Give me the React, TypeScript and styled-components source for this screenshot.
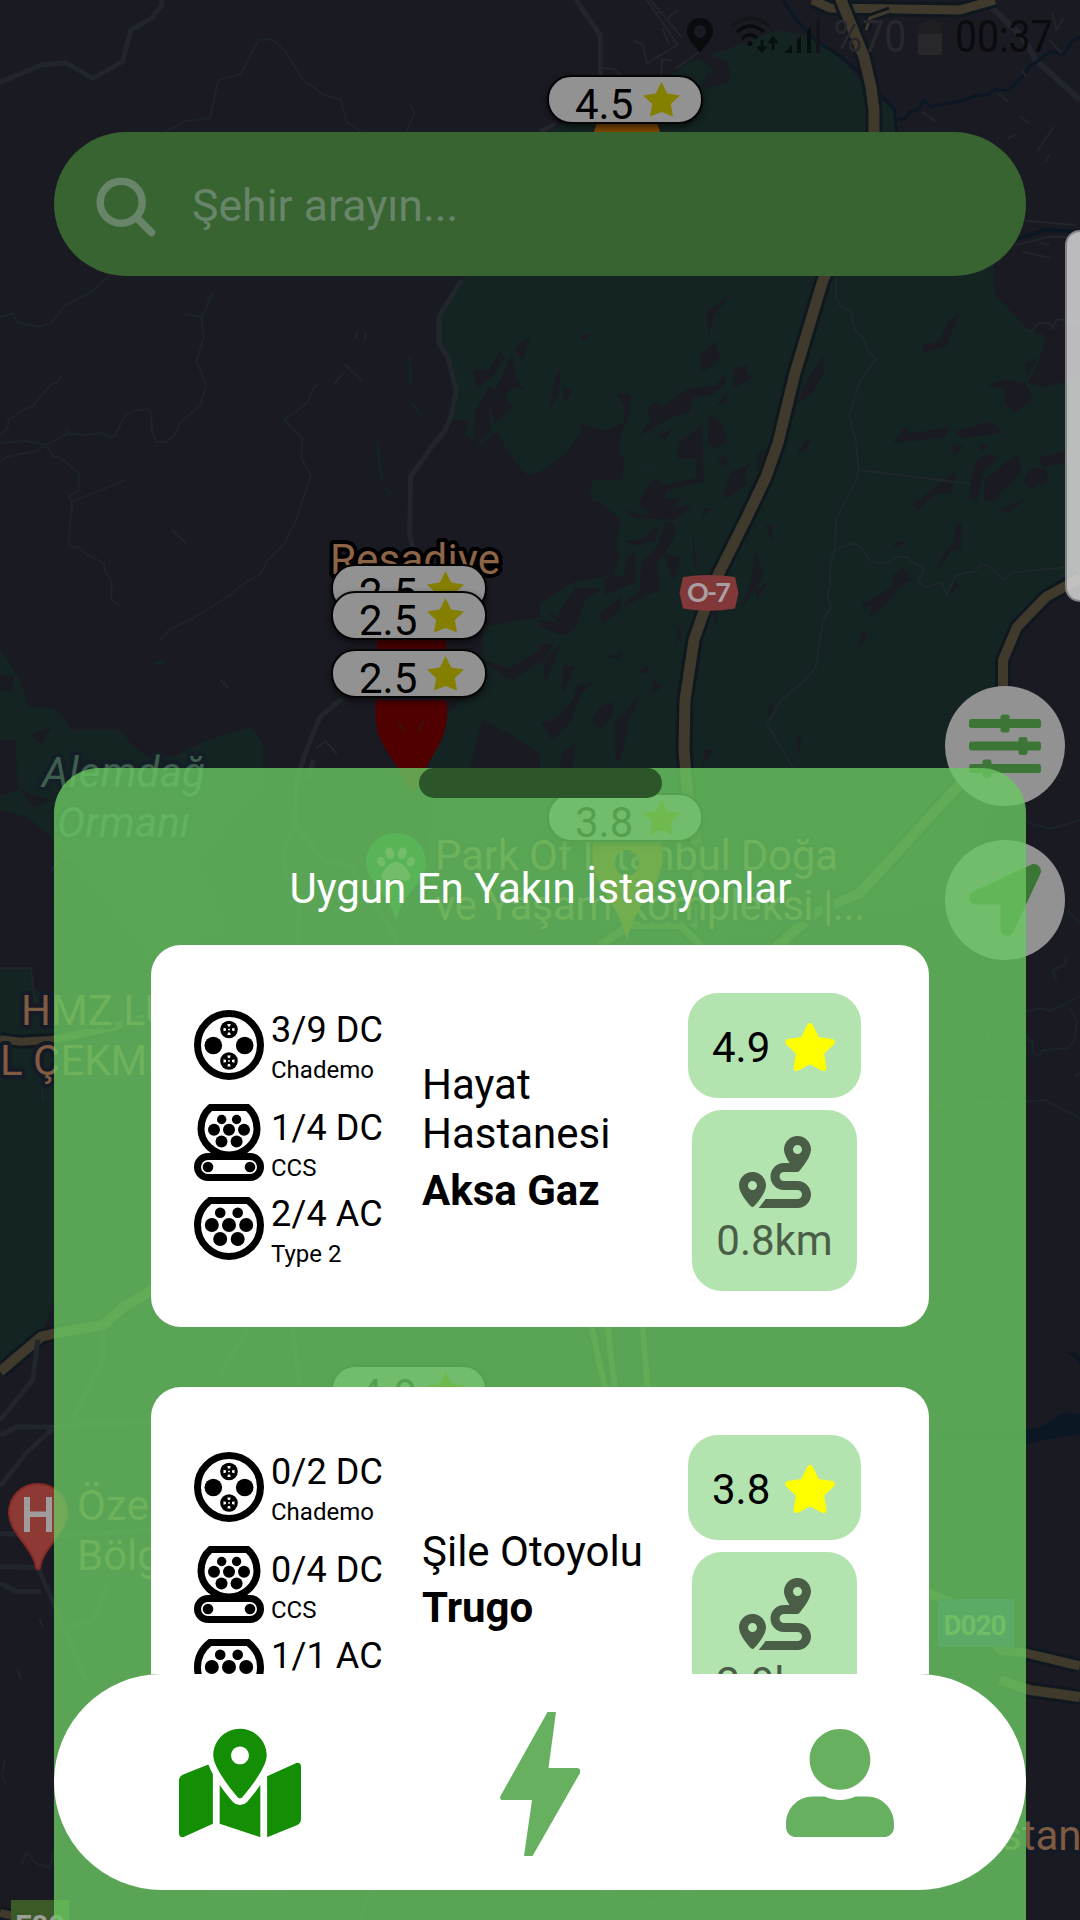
import React from "react";
import styled, { createGlobalStyle } from "styled-components";
import { FaLocationArrow, FaMapMarkedAlt, FaPaw, FaSlidersH, FaUserAlt } from "react-icons/fa";
import { FaRoute, FaStar } from "react-icons/fa6";

const GlobalStyle = createGlobalStyle`
  * { box-sizing: border-box; }
  html, body { margin: 0; padding: 0; background: #1a1a23; }
  body { font-family: Roboto, "Noto Sans", sans-serif; overflow: hidden; }
  svg { display: block; }
`;

const Screen = styled.div`
  position: relative;
  width: 1080px;
  height: 1920px;
  overflow: hidden;
  background: #1a1a23;
`;

/* ---------- map ---------- */

const MapCanvas = styled.svg`
  position: absolute;
  inset: 0;
`;

const Bubble = styled.div<{ $x: number; $y: number }>`
  position: absolute;
  left: ${(p) => p.$x}px;
  top: ${(p) => p.$y}px;
  width: 156px;
  height: 49px;
  padding: 5px 21px 0 26px;
  display: flex;
  justify-content: space-between;
  border: 2px solid #050505;
  border-radius: 24px;
  background: #929292;
  box-shadow: 0 3px 6px rgba(0, 0, 0, 0.55);
  color: #000;
  font-size: 42px;
  line-height: 45px;
`;

const BubbleStar = styled.svg`
  width: 37px;
  height: 35px;
  fill: #857f00;
`;

const BUBBLES = [
  { x: 547, y: 75, rating: "4.5" },
  { x: 331, y: 564, rating: "2.5" },
  { x: 331, y: 591, rating: "2.5" },
  { x: 331, y: 649, rating: "2.5" },
  { x: 547, y: 793, rating: "3.8" },
  { x: 331, y: 1365, rating: "4.9" },
];

const MINOR = "#20262c";
const TRAIL = "#1b2528";
const LAND = "#1a1a23";
const FOREST = "#142422";
const WATER = "#0b1824";

const Line = ({ d, c = TRAIL, w = 2 }: { d: string; c?: string; w?: number }) => (
  <path d={d} fill="none" stroke={c} strokeWidth={w} strokeLinejoin="round" vectorEffect="non-scaling-stroke" />
);

const Highway = ({ d, w = 11 }: { d: string; w?: number }) => (
  <>
    <Line d={d} c="#10181f" w={w + 6} />
    <Line d={d} c="#403a2d" w={w} />
  </>
);

const tile = (x: number, y: number) => `translate(${x} ${y}) scale(.34435 .33333)`;

function Map() {
  return (
    <MapCanvas width="1080" height="1920" viewBox="0 0 1080 1920">
      <rect width="1080" height="1920" fill={LAND} />
      {/* forests */}
      <path
        fill={FOREST}
        d="M688 63L729 48 778 30 805 35 833 50 860 80 881 100 895 110 897 200 994 263 994 293 1029 330 1050 337 1043 350 1029 383 1067 377 1080 373 1080 578 1017 630 1003 657 998 700 998 790 960 900 700 945 427 900 430 760 447 715 470 690 482 650 482 627 540 617 540 603 574 582 614 575 619 557 616 540 621 520 602 503 592 501 590 490 593 480 622 480 624 460 619 453 622 423 605 431 581 423 581 433 562 457 540 472 527 475 516 463 496 432 479 445 465 435 468 420 451 420 456 390 447 355 439 343 439 317 461 280 548 132 560 125 680 70Z"
      />
      <path
        fill={FOREST}
        d="M0 650L20 680 28 706 58 710 72 730 120 730 134 747 148 757 172 757 207 740 251 727 263 743 263 790 200 860 230 930 150 960 56 843 28 817 0 810Z M0 968L31 968 34 990 54 995 54 1300 40 1340 0 1372Z"
      />
      <path fill={LAND} d="M0 740L15 740 18 790 0 795Z M30 735L52 726 42 745Z M20 790L50 800 34 808Z M0 675L14 676 12 692 0 690Z" />
      <path fill={LAND} d="M482 720L512 735 540 755 540 768 470 768Z M700 60L704 54 726 60 731 72 728 82 708 88 702 86 708 74 716 73Z" />
      {/* clearings inside the western wood */}
      <g transform={tile(0, 280)} fill={LAND}>
        <path d="M1375 270L1420 268 1450 215 1466 235 1430 290 1385 325Z M1492 208L1538 168 1520 240Z M1487 220L1496 290 1524 330 1490 320 1465 350 1488 380 1435 430 1425 380 1440 330Z M1378 400L1420 320 1438 330 1422 390 1424 455 1400 480 1375 490Z M1470 1195L1400 1140 1480 1165 1568 1110 1568 1140 1495 1198Z" />
      </g>
      {/* clearings east of the ridge */}
      <g transform={tile(540, 280)} fill={LAND}>
        <path d="M482 97L560 38 505 105 490 165Z M118 170L165 155 122 183Z M465 225L510 183 522 240 470 277Z M565 265L600 252 598 280 622 292 562 325Z M60 260L42 300 30 385 55 340Z M70 315L92 335 68 368Z M224 340L262 342 260 400 235 460 190 455 245 430 245 380Z M310 400L330 365 355 382 430 325 505 318 540 285 540 310 510 340 440 355 438 395 375 415 285 472 325 415Z M512 375L545 335 538 370Z M345 465L390 445 362 480Z M400 490L470 435 475 605 370 630 362 655 410 655 350 720 285 675 320 605 335 595 360 615 452 595 455 535 400 535Z M490 405L525 425 543 480 510 510 488 490Z M515 545L540 522 545 560Z M555 575L612 552 590 590 605 612 540 655 530 645Z" />
        <path d="M250 690L300 705 375 680 440 678 395 718 270 715Z M470 715L475 685 498 685Z M365 725L392 730 388 775 340 850 345 930 240 980 250 960 290 935 295 850 340 800Z M245 785L300 775 345 735 335 780 285 797Z M250 840L272 815 280 905 190 945 185 895 245 885Z M358 820L410 835 388 900Z M445 750L455 880 445 840Z M100 925L180 925 130 960 100 1050 60 1065 0 1040 0 1020 50 1030 15 985 50 1010Z M170 1005L235 950 235 990 182 1032Z M0 1095L40 1090 0 1160Z M10 1150L65 1080 15 1210Z M185 1130L240 1115 235 1138Z M285 1175L310 1155 318 1182Z M330 1195L350 1220 328 1245Z M68 1155L100 1160 65 1245Z M110 1215L160 1205 95 1260Z" />
        <path d="M822 225L824 280 790 340 745 375 765 325Z M780 475L788 490 745 530 765 490Z M632 520L652 510 632 575Z M655 735L675 735 675 790Z M625 810L650 885 585 985 615 895Z M665 905L630 960 625 930Z M400 1030L410 1060 395 1100Z M940 1050L950 1072 925 1100Z M500 985L520 990 510 1035Z M936 975L1030 915 1025 885 1055 862 1078 900 1040 920 1025 950 955 1018 965 975 940 990Z M1022 810L1035 785 1065 785Z M1210 725L1225 735 1222 805 1195 812 1150 875 1170 825 1200 790Z M1205 905L1220 918 1185 945Z" />
        <path d="M1218 98L1180 200 1108 220 1112 195 1160 185 1185 125Z M1320 0L1568 0 1568 150 1420 150 1325 45Z M1470 155L1568 150 1568 290 1470 322 1415 310 1455 240Z M1300 318L1340 298 1410 310 1430 352 1380 400 1350 370 1350 330Z M1410 250L1445 235 1412 295Z M1025 490L1060 440 1075 460 1188 443 1178 472Z M1205 455L1310 425 1348 458 1225 475Z M1200 493L1230 500 1200 528Z M1275 488L1300 495 1280 517Z M1082 675L1175 600 1208 575 1195 640 1150 640 1100 688Z M1250 600L1270 540 1295 520 1328 535 1290 570 1268 668 1250 655Z M1290 600L1385 522 1398 575 1315 665 1288 660Z M1450 530L1530 515 1525 550 1460 560Z M1402 605L1425 565 1465 565 1477 600 1430 625Z M1338 685L1410 658 1355 702Z" />
      </g>
      <g transform={tile(540, 680)} fill={LAND}>
        <path d="M5 130L50 115 130 15 105 75 90 125 35 180Z M148 125L175 80 215 65 210 105 180 145Z M218 130L290 45 255 130 235 240 220 245Z M65 215L102 190 95 264 58 264Z M328 0L352 20 330 42Z M668 65L680 85 660 120Z M745 185L758 155 755 225Z M480 205L500 215 470 260Z" />
      </g>
      {/* western trails */}
      <g transform={tile(0, 280)}>
        <Line d="M0 110L38 100 50 128 115 140 150 128 190 75 265 36 305 0" />
        <Line d="M620 38L585 112 532 102M585 112L592 170 570 245 600 315 582 375 525 425 508 465 480 487 452 485 440 445 440 410 432 387 400 389 365 403 335 465 320 473 298 458 250 465 198 460 133 495 70 482 0 490M133 495L105 513 15 532 0 548M190 447L200 460" />
        <Line d="M180 287L165 308 148 313 95 378 55 395 40 412 25 415 22 445 0 465" />
        <Line d="M133 495L155 530 173 532 230 580 227 632 200 648 210 665 365 600M210 665L198 790 208 802 225 800 250 822 302 850 305 872 325 905 323 958 348 978" />
        <Line d="M930 310L910 325 890 370 825 420 878 474 875 530 902 588 860 720 823 795 778 840 755 883 705 912 665 948 560 1015 487 1053 475 1070 457 1083" />
        <Line d="M1340 0L1275 110 1275 190 1300 230 1325 330 1310 410 1290 455 1250 505 1192 590 1190 770 1205 820" c={MINOR} w={5} />
        <Line d="M500 748L542 792M640 1200L664 1223M1000 252L1052 302M998 278L968 314M1038 155L1032 175M1062 155L1060 185" c={MINOR} />
        <Line d="M1190 225L1193 315M1196 368L1222 405M1096 485L1110 610M1118 622L1138 645M447 1148L480 1148" c={FOREST} w={3} />
      </g>
      <g transform="scale(.68871 .33333)">
        <Line d="M235 0L235 15 220 55 190 90 178 185 135 235 95 188 60 195 0 247" c={MINOR} w={5} />
        <Line d="M240 396L270 362 305 355 317 240 350 222 375 120 395 118 415 155 440 240 470 285 495 300 503 365 525 396M595 315L602 340 590 396M160 826L130 880 108 900M308 878L300 900" />
      </g>
      {/* northern roads and stream */}
      <g transform={tile(540, 0)}>
        <Line d="M105 0L175 105 175 225M0 396L45 370" c={MINOR} w={5} />
        <Line d="M310 0L400 135M335 40L360 35M320 0L410 110M270 120L300 135 310 190 400 135M355 178L352 225M385 182L350 178M180 205L215 208 235 225M395 205L470 150M365 60L400 30M355 85L375 135" c={MINOR} />
        <Line d="M1310 20L1400 110 1440 180 1568 300" c={MINOR} w={6} />
        <Line d="M705 0L745 60 800 120 880 175 930 220 1030 330 1035 396M1040 358L1058 358 1075 335 1098 330 1115 300 1135 320 1235 300 1262 288 1300 285 1318 268 1360 272 1410 220 1420 200 1450 180 1482 155 1520 162 1545 125 1568 110" c={WATER} w={3} />
        <Line d="M1488 40L1500 90 1520 55M1480 120L1515 160M1400 210L1412 230M1330 280L1360 305M1110 335L1148 365M1395 350L1420 370M1358 416L1385 400M1492 380L1445 453M1480 465L1467 487M1410 662L1555 675M1450 728L1480 735M1402 755L1482 775" c={MINOR} />
        <Line d="M1390 715L1470 690 1568 695" c={WATER} w={4} />
        <Line d="M1380 735L1480 710 1568 712" c={MINOR} />
      </g>
      {/* eastern trails */}
      <g transform={tile(540, 280)}>
        <Line d="M860 0L860 60 875 82 903 95 914 150 940 175 952 213 975 238 930 300 898 405 918 490 925 570 1250 612M925 570L918 600 860 718 855 810 842 855 843 915 835 950 845 980 822 1020 800 1165 755 1215 700 1260" c="#1f272a" />
        <Line d="M850 820L870 803 908 790 935 803 955 838 975 848 1010 848 1032 832 1065 830 1080 845 1115 867 1098 905 1118 923 1155 910 1170 915 1182 945 1205 890 1232 877 1258 876 1282 852 1305 860 1348 900 1370 877 1505 865 1568 845M1410 150L1425 157 1450 128 1480 130 1490 145 1500 118 1568 125" c="#1f272a" />
        <Line d="M300 575L323 562" />
      </g>
      <g transform={tile(540, 680)}>
        <Line d="M770 0L700 60 660 135 735 264" c="#1f272a" />
        <Line d="M1411 425L1480 447 1568 420M1530 830L1523 855 1490 870 1500 905M1411 995L1455 985 1485 993 1568 948M1411 1060L1418 1080 1430 1082 1430 1115 1445 1128 1462 1110 1535 1105 1555 1075 1558 1020 1540 985M1550 1190L1568 1180M1215 980L1210 1010 1290 1045 1320 1110 1340 1110M1530 690L1568 730M1140 1275L1411 1265 1465 1260 1568 1315" />
      </g>
      {/* roads below the ridge */}
      <g transform={tile(0, 680)}>
        <Line d="M995 55L930 110 890 210 860 300 858 440 825 500 830 600M858 440L940 540 1020 560 1160 790M870 640L865 790M910 240L895 300" c={MINOR} w={5} />
        <Line d="M918 205L945 183 978 222M640 0L660 22M150 570L185 530 210 530M180 660L260 800M0 865L90 865 105 990M120 1200L125 1260" c={MINOR} />
        <Highway d="M0 1078L60 1085 150 1080 310 1045 438 1010" w={8} />
      </g>
      <g transform={tile(0, 1320)}>
        <Highway d="M0 155L120 50 160 40 300 15 360 -40 460 -100" w={10} />
        <Line d="M110 60L95 180 0 300M0 345L50 320 157 322 240 310 438 308M157 322L75 400 0 500M0 640L160 650 438 630M0 740L110 742M0 790L50 815 120 815M110 742L160 860 250 1080M300 30L300 120 210 300M720 30L640 160M850 30L870 200M160 930L270 900 310 800" c={MINOR} w={5} />
        <Line d="M115 895L125 925M52 1050L60 1075" c={MINOR} />
      </g>
      <Line d="M5 1760L2 1775 6 1785M22 1865L26 1852 35 1863 50 1868 54 1850M210 1890L280 1892 300 1908 330 1905M600 1890L640 1905 690 1895M370 1890L360 1920" />
      <Highway d="M0 1913L30 1920" w={8} />
      <Highway d="M874 132L866 190 823 280 795 373 778 443 766 477 747 517 719 573 702 617 694 640 688 680 685 700 684 750 688 800 700 860 690 940" />
      <Highway d="M812 0L830 8 960 10 995 0" w={9} />
      <Highway d="M866 30L870 18 890 11" w={3} />
      <Highway d="M839 -5L852 27 864 57 871 87 874 110 874 134" />
      <Highway d="M1080 578L1046 597 1017 627 1003 660 1003 700 960 784 860 893 815 913 775 948" w={10} />
      <Highway d="M590 1320L606 1392M607 1320L615 1392M642 1320L648 1392" w={6} />
      <Highway d="M600 945L630 925 680 925 700 945" w={8} />
      <Highway d="M920 1590L970 1610 1000 1650 1026 1653 1080 1666" w={9} />
      <Highway d="M1000 1680L1030 1690 1080 1697" w={10} />
      <path d="M920 1427L990 1432 1040 1428 1063 1413 1080 1414 1080 1434 1045 1440 1028 1444 980 1438 920 1440Z" fill={WATER} />
      <path d="M1064 1352L1076 1353 1080 1358 1080 1364 1074 1357Z" fill={WATER} />

      {/* place names */}
      <g fontFamily="Roboto, sans-serif" fontSize="42" stroke="#141a26" strokeWidth="8" paintOrder="stroke" strokeLinejoin="round">
        <g fill="#3e5e4c" fontStyle="italic" stroke="#131e26">
          <text x="42" y="787" textLength="163">Alemdağ</text>
          <text x="57" y="837" textLength="133">Ormanı</text>
        </g>
        <g fill="#7f5b42">
          <text x="21" y="1025">HMZ LUX</text>
          <text x="0" y="1075">L ÇEKMEK</text>
          <text x="435" y="870" textLength="403">Park Of İstanbul Doğa</text>
          <text x="435" y="920" textLength="430">ve Yaşam Kompleksi |...</text>
          <text x="77" y="1520">Özel</text>
          <text x="77" y="1570">Bölge</text>
          <text x="1000" y="1850">stanc</text>
        </g>
        <text x="330" y="574" textLength="170" fill="#8d6446" stroke="#000">
          Reşadiye
        </text>
      </g>
      <path d="M683 577Q709 573 735 577L738.500 593 735 608.500Q709 613 683 608.500L679.500 593Z" fill="#823738" />
      <text x="709" y="602" textAnchor="middle" fontFamily="Lato, sans-serif" fontWeight="700" fontSize="27" fill="#a99fa2" textLength="44">
        O-7
      </text>
      <rect x="938" y="1599" width="76" height="48" fill="#1e3778" />
      <text x="975" y="1635" textAnchor="middle" fontFamily="Roboto, sans-serif" fontWeight="700" fontSize="28" fill="#8a8f7a" textLength="63">
        D020
      </text>
      <rect x="11" y="1900" width="58" height="30" fill="#3b5a27" />
      <text x="40" y="1936" textAnchor="middle" fontFamily="Roboto, sans-serif" fontWeight="700" fontSize="29" fill="#9c9f98">
        E80
      </text>

      {/* station pins */}
      <path d="M377 640H446V650H377Z" fill="#4c0000" />
      <path d="M376 700Q374 716 378 733C384 752 402 768 412 797C422 768 438 752 444 733Q449 716 446 700Z" fill="#510000" />
      <path d="M398 721L404 732M424 721L418 732" stroke="#3b1114" strokeWidth="2" />
      <path d="M597 123H657L661 134H593Z" fill="#7c4600" />
      <path
        d="M594 840Q590 858 595 873C602 893 620 910 627 940C634 910 652 893 660 873Q665 858 661 840ZM627 850A12 13 0 1 1 627 876 12 13 0 1 1 627 850Z"
        fill="#8f4300"
        fillRule="evenodd"
      />
      {/* place pins */}
      <path d="M396 833C414 833 426 847 426 863C426 882 403 892 396 921C389 892 366 882 366 863C366 847 378 833 396 833Z" fill="#14642d" />
      <g transform="translate(377 845)" color="#948f8c">
        <FaPaw size={38} />
      </g>
      <path
        d="M38 1484C55 1484 67 1497 67 1513C67 1533 42 1548 40 1568Q38 1571 36 1568C34 1548 9 1533 9 1513C9 1497 21 1484 38 1484Z"
        fill="#8d3a35"
        stroke="#852a26"
        strokeWidth="2"
      />
      <path d="M24 1497H30V1511.500H46V1497H52V1532H46V1517H30V1532H24Z" fill="#a09b9c" />
    </MapCanvas>
  );
}

/* ---------- status bar ---------- */

const StatusBar = styled.div`
  position: absolute;
  top: 0;
  left: 0;
  width: 100%;
  height: 72px;
  padding-right: 25px;
  display: flex;
  justify-content: flex-end;
  align-items: center;
`;

const StatusText = styled.span<{ $color: string; $width: number }>`
  width: ${(p) => p.$width}px;
  display: flex;
  justify-content: center;
  color: ${(p) => p.$color};
  font-size: 44px;
  line-height: 52px;
  padding-top: 2px;

  span {
    display: block;
    transform: scaleX(0.89);
  }
`;

const StatusIcons = styled.svg`
  margin-right: 15px;
`;

const Battery = styled.svg`
  margin: 2px 11px 0 14px;
`;

/* ---------- search ---------- */

const SearchBar = styled.label`
  position: absolute;
  top: 132px;
  left: 54px;
  width: 972px;
  height: 144px;
  padding: 5px 42px 0;
  display: flex;
  align-items: center;
  gap: 36px;
  border-radius: 72px;
  background: #376431;
  color: #68856a;
`;

const SearchIcon = () => (
  <svg width="60" height="60" viewBox="0 0 60 60" fill="none" stroke="currentColor" strokeWidth="7.500" strokeLinecap="round">
    <circle cx="25.200" cy="25.200" r="21" />
    <path d="M41 41L55.500 55.500" />
  </svg>
);

const Placeholder = styled.span`
  font-size: 44.6px;
  line-height: 56px;
  margin-bottom: 1px;
`;

const EdgePanel = styled.div`
  position: absolute;
  top: 230px;
  left: 1065px;
  width: 30px;
  height: 372px;
  border: 2px solid rgba(120, 120, 125, 0.8);
  border-radius: 16px;
  background: rgba(228, 228, 228, 0.8);
`;

const MapActions = styled.div`
  position: absolute;
  top: 686px;
  right: 15px;
  display: flex;
  flex-direction: column;
  gap: 34px;
`;

const RoundButton = styled.button`
  width: 120px;
  height: 120px;
  padding: 0;
  display: flex;
  align-items: center;
  justify-content: center;
  border: 0;
  border-radius: 50%;
  background: #929292;
  color: #3c7636;
`;

/* ---------- bottom sheet ---------- */

const Sheet = styled.section`
  position: absolute;
  top: 768px;
  left: 54px;
  width: 972px;
  height: 1152px;
  display: flex;
  flex-direction: column;
  align-items: center;
  border-radius: 45px 45px 0 0;
  background: rgba(106, 200, 97, 0.8);
`;

const Handle = styled.div`
  width: 243px;
  height: 30px;
  flex: none;
  border-radius: 15px;
  background: #2d552a;
`;

const SheetTitle = styled.h1`
  margin: 65px 0 0;
  padding-left: 1px;
  height: 82px;
  flex: none;
  color: #fff;
  font-size: 42px;
  line-height: 52px;
  font-weight: 400;
`;

const StationList = styled.div`
  width: 778px;
  height: 729px;
  display: flex;
  flex-direction: column;
  gap: 60px;
  overflow: hidden;
`;

const Card = styled.article`
  height: 382px;
  flex: none;
  padding: 48px 68px 36px 43px;
  display: flex;
  border-radius: 30px;
  background: #fff;
  color: #000;
`;

const Plugs = styled.div`
  width: 228px;
  padding-top: 13px;
  display: flex;
  flex-direction: column;
`;

const PlugRow = styled.div<{ $gap: number }>`
  height: 80px;
  margin-bottom: ${(p) => p.$gap}px;
  display: flex;
  align-items: center;
  gap: 7px;

  svg {
    flex: none;
    margin-bottom: 3px;
  }
`;

const PlugCount = styled.div`
  font-size: 36px;
  line-height: 48px;
  letter-spacing: 0.15px;
  white-space: nowrap;
`;

const PlugName = styled.div`
  font-size: 24px;
  line-height: 32px;
`;

const Names = styled.div`
  flex: 1;
  padding: 0 24px 9px 0;
  display: flex;
  flex-direction: column;
  justify-content: center;
  gap: 7.500px;
  font-size: 42px;
  line-height: 49px;
`;

const Operator = styled.strong`
  font-weight: 700;
`;

const Facts = styled.div`
  width: 173px;
  flex: none;
  display: flex;
  flex-direction: column;
  align-items: center;
  gap: 12px;
`;

const Rating = styled.div`
  width: 173px;
  height: 105px;
  padding: 3px 24px 0;
  display: flex;
  align-items: center;
  justify-content: space-between;
  border-radius: 30px;
  background: #b3e3ae;
  font-size: 42px;
`;

const RatingStar = styled(FaStar)`
  width: 54px;
  height: 48px;
  color: #ff0;
`;

const Distance = styled.div`
  width: 165px;
  height: 181px;
  padding-top: 26px;
  display: flex;
  flex-direction: column;
  align-items: center;
  gap: 8px;
  border-radius: 30px;
  background: #b3e3ae;
  color: #4a5d47;
  font-size: 42px;
  line-height: 49px;
`;

const TabBar = styled.nav`
  position: absolute;
  top: 1674px;
  left: 54px;
  width: 972px;
  height: 216px;
  padding: 1px 132px 0 125px;
  display: grid;
  grid-template-columns: 321px 286px 108px;
  align-items: center;
  border-radius: 108px;
  background: #fff;
`;

const Tab = styled.a<{ $active?: boolean }>`
  color: ${(p) => (p.$active ? "#148e05" : "#67b05f")};
`;

const Bolt = styled.svg`
  margin-top: 3px;
`;

/* ---------- connector drawings ---------- */

const ChademoIcon = () => (
  <svg width="70" height="70" viewBox="0 0 70 70">
    <circle cx="35" cy="35" r="31.500" fill="none" stroke="#000" strokeWidth="7" />
    <circle cx="19.300" cy="35.500" r="8.800" />
    <circle cx="50.700" cy="35.500" r="8.800" />
    {[19.5, 51].map((cy) => (
      <g key={cy} transform={`translate(35 ${cy})`}>
        <circle r="8.800" />
        <path d="M-1.700 -5.500H1.700L1 -3H-1ZM-1.700 5.500H1.700L1 3H-1ZM-5.500 -1.700V1.700L-3 1V-1ZM5.500 -1.700V1.700L3 1V-1Z" fill="#fff" />
        <path d="M0 -1L0 1M-1 0H1" stroke="#fff" strokeWidth=".8" />
      </g>
    ))}
  </svg>
);

const CcsIcon = () => (
  <svg width="70" height="78" viewBox="0 0 70 78">
    <path d="M16.500 3.500H53.500C60 9 63 17 63 25C63 38 51 51 35 51S7 38 7 25C7 17 10 9 16.500 3.500Z" fill="none" stroke="#000" strokeWidth="7" />
    <circle cx="27.700" cy="15.500" r="4.700" />
    <circle cx="42.600" cy="15.500" r="4.700" />
    <circle cx="20" cy="25.700" r="6" />
    <circle cx="35" cy="25.700" r="6" />
    <circle cx="50" cy="25.700" r="6" />
    <circle cx="27.500" cy="37.500" r="6" />
    <circle cx="42.600" cy="37.500" r="6" />
    <rect x="3.500" y="52.500" width="63" height="21" rx="10.500" fill="#fff" stroke="#000" strokeWidth="7" />
    <circle cx="14" cy="63" r="5.300" />
    <circle cx="56" cy="63" r="5.300" />
  </svg>
);

const Type2Icon = () => (
  <svg width="70" height="63" viewBox="0 0 70 63">
    <path d="M16 3.500H54C61.500 9.500 66.500 18 66.500 28C66.500 45.500 52.500 59.500 35 59.500S3.500 45.500 3.500 28C3.500 18 8.500 9.500 16 3.500Z" fill="none" stroke="#000" strokeWidth="7" />
    <circle cx="26.200" cy="15.700" r="5.300" />
    <circle cx="43.700" cy="15.700" r="5.300" />
    <circle cx="17.800" cy="28" r="7" />
    <circle cx="35" cy="28" r="7" />
    <circle cx="52.200" cy="28" r="7" />
    <circle cx="26.200" cy="42" r="7" />
    <circle cx="43.700" cy="42" r="7" />
  </svg>
);

const PLUG_ICONS = { Chademo: ChademoIcon, CCS: CcsIcon, "Type 2": Type2Icon };
type Plug = { kind: keyof typeof PLUG_ICONS; count: string };

const STATIONS: { name: string; operator: string; rating: string; distance: string; plugs: Plug[] }[] = [
  {
    name: "Hayat Hastanesi",
    operator: "Aksa Gaz",
    rating: "4.9",
    distance: "0.8km",
    plugs: [
      { kind: "Chademo", count: "3/9 DC" },
      { kind: "CCS", count: "1/4 DC" },
      { kind: "Type 2", count: "2/4 AC" },
    ],
  },
  {
    name: "Şile Otoyolu",
    operator: "Trugo",
    rating: "3.8",
    distance: "2.9km",
    plugs: [
      { kind: "Chademo", count: "0/2 DC" },
      { kind: "CCS", count: "0/4 DC" },
      { kind: "Type 2", count: "1/1 AC" },
    ],
  },
];

const ROW_GAPS = [18, 6, 0];

export default function App() {
  return (
    <>
      <GlobalStyle />
      <Screen>
        <Map />
        {BUBBLES.map((b) => (
          <Bubble key={b.y} $x={b.x} $y={b.y}>
            {b.rating}
            <BubbleStar viewBox="0 0 37 35">
              <path d="M18.500 0L24.200 11.500 37 13.500 27.800 22 30 34.500 18.500 30 7 34.500 9.200 22 0 13.500 12.800 11.500Z" />
            </BubbleStar>
          </Bubble>
        ))}

        <StatusBar>
          <StatusIcons width="134" height="40" viewBox="687 16 134 40">
            <path
              d="M700 18C708 18 713 24 713 32C713 40 704 46 700 53C696 46 687 40 687 32C687 24 692 18 700 18ZM700 25A6 6.500 0 1 0 700 38 6 6.500 0 1 0 700 25Z"
              fill="#0a0b0d"
              fillRule="evenodd"
            />
            <g fill="none" strokeWidth="3.200">
              <path d="M732 26Q750 10 769 26" stroke="#141519" />
              <path d="M737 32Q750 20 764 32M742 39Q750 31 757 38" stroke="#0a0b0e" />
            </g>
            <circle cx="750" cy="43.500" r="2.600" fill="#0a0b0e" />
            <path d="M762 40V50M758 46.500L762 51L766 46.500M773 50V39M769 43L773 38L777 43" fill="none" stroke="#07100f" strokeWidth="2.800" />
            <path d="M784 53L792 45V53ZM797 40L801 36V53H797ZM807 31L811 26V53H807Z" fill="#07100f" />
            <path d="M816 21L820 17V53H816Z" fill="#12161a" />
          </StatusIcons>
          <StatusText $color="#28282c" $width={68}>
            <span>%70</span>
          </StatusText>
          <Battery width="24" height="35" viewBox="0 0 24 35">
            <path d="M7 0H17V3H22Q24 3 24 5V33Q24 35 22 35H2Q0 35 0 33V5Q0 3 2 3H7Z" fill="#1f1f22" />
            <path d="M0 14H24V33Q24 35 22 35H2Q0 35 0 33Z" fill="#28272a" />
          </Battery>
          <StatusText $color="#0b0b0e" $width={102}>
            <span>00:37</span>
          </StatusText>
        </StatusBar>

        <SearchBar>
          <SearchIcon />
          <Placeholder>Şehir arayın...</Placeholder>
        </SearchBar>
        <EdgePanel />
        <MapActions>
          <RoundButton aria-label="Filtre">
            <FaSlidersH size={72} />
          </RoundButton>
          <RoundButton aria-label="Konum">
            <FaLocationArrow size={72} />
          </RoundButton>
        </MapActions>

        <Sheet>
          <Handle />
          <SheetTitle>Uygun En Yakın İstasyonlar</SheetTitle>
          <StationList>
            {STATIONS.map((s) => (
              <Card key={s.operator}>
                <Plugs>
                  {s.plugs.map((p, i) => {
                    const Icon = PLUG_ICONS[p.kind];
                    return (
                      <PlugRow key={p.kind} $gap={ROW_GAPS[i]}>
                        <Icon />
                        <div>
                          <PlugCount>{p.count}</PlugCount>
                          <PlugName>{p.kind}</PlugName>
                        </div>
                      </PlugRow>
                    );
                  })}
                </Plugs>
                <Names>
                  <span>{s.name}</span>
                  <Operator>{s.operator}</Operator>
                </Names>
                <Facts>
                  <Rating>
                    {s.rating}
                    <RatingStar />
                  </Rating>
                  <Distance>
                    <FaRoute size={72} />
                    {s.distance}
                  </Distance>
                </Facts>
              </Card>
            ))}
          </StationList>
        </Sheet>

        <TabBar>
          <Tab $active>
            <FaMapMarkedAlt size={122} />
          </Tab>
          <Tab>
            <Bolt width="80" height="144" viewBox="0 0 80 144" fill="currentColor">
              <path d="M47.500 0H56L48.500 56H77Q81 56 80 61L32.500 144H24L32 88H3Q-1 88 .5 84Z" />
            </Bolt>
          </Tab>
          <Tab>
            <FaUserAlt size={108} />
          </Tab>
        </TabBar>
      </Screen>
    </>
  );
}
